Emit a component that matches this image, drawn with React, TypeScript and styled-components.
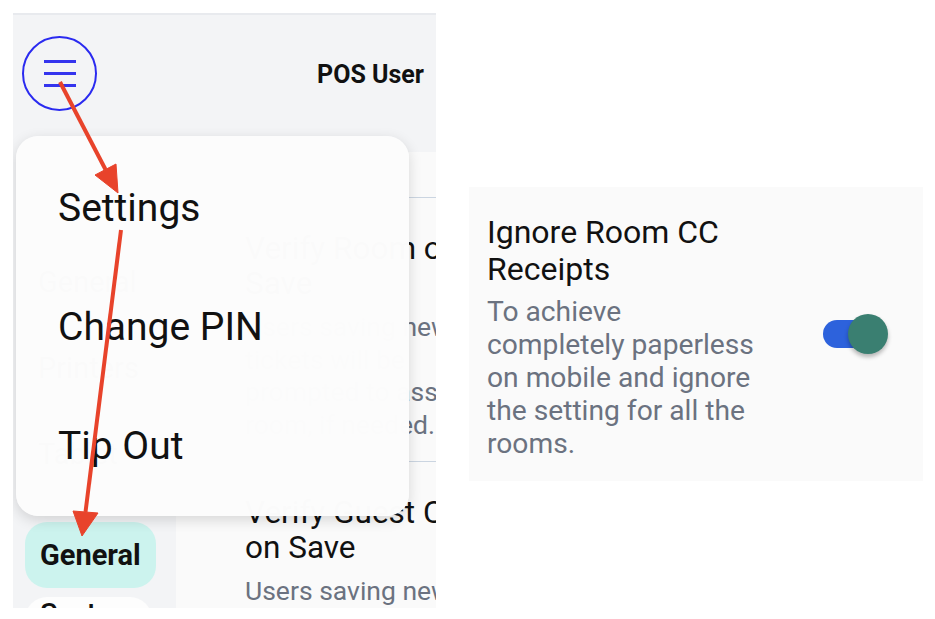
import React from 'react';
import styled, { createGlobalStyle } from 'styled-components';

const GlobalStyle = createGlobalStyle`
	html, body {
		margin: 0;
		padding: 0;
		background: #ffffff;
		font-family: Roboto, 'Noto Sans', 'Liberation Sans', sans-serif;
	}
`;

const Page = styled.div`
	display: flex;
	align-items: flex-start;
	padding: 13px 0 0 13px;
	gap: 33px;
`;

const Phone = styled.div`
	position: relative;
	width: 423px;
	height: 595px;
	flex-shrink: 0;
	overflow: hidden;
	background: #fafafa;
	display: flex;
	flex-direction: column;
`;

const TopStrip = styled.div`
	height: 2px;
	flex-shrink: 0;
	background: #e8eaee;
`;

const Header = styled.header`
	height: 137px;
	flex-shrink: 0;
	box-sizing: border-box;
	padding: 21px 12px 0 9px;
	background: #f3f4f6;
	display: flex;
	align-items: flex-start;
	justify-content: space-between;
`;

const MenuButton = styled.button`
	width: 75px;
	height: 75px;
	box-sizing: border-box;
	border: 2px solid #2a2af0;
	border-radius: 50%;
	background: transparent;
	padding: 0;
	display: flex;
	flex-direction: column;
	align-items: center;
	justify-content: center;
	gap: 9.5px;
`;

const BurgerLine = styled.span`
	display: block;
	width: 32px;
	height: 2.5px;
	background: #3434ee;
`;

const UserName = styled.div`
	line-height: 78px;
	font-size: 25px;
	font-weight: 700;
	color: #111;
`;

const Body = styled.div`
	flex: 1;
	display: flex;
	min-height: 0;
`;

const Sidebar = styled.nav`
	width: 163px;
	flex-shrink: 0;
	box-sizing: border-box;
	padding-top: 97px;
	background: #f3f4f6;
	display: flex;
	flex-direction: column;
	gap: 20px;
`;

const NavGroup = styled.div`
	flex-shrink: 0;
	display: flex;
	flex-direction: column;
	gap: 9px;
	margin-top: 15px;
`;

const NavItem = styled.div<{ $active?: boolean; $pill?: boolean }>`
	flex-shrink: 0;
	align-self: flex-start;
	height: 66px;
	margin-left: ${(p) => (p.$pill ? '12px' : '10px')};
	padding: 0 15px;
	border-radius: 22px;
	display: flex;
	align-items: ${(p) => (p.$pill && !p.$active ? 'flex-start' : 'center')};
	line-height: 35px;
	font-size: 29px;
	font-weight: ${(p) => (p.$active ? 700 : p.$pill ? 500 : 400)};
	color: #111;
	background: ${(p) => (p.$active ? '#ccf3ee' : p.$pill ? '#fdfdfd' : 'transparent')};
`;

const Content = styled.section`
	flex: 1;
	padding-top: 45px;
	background: #fafafa;
	overflow: hidden;
`;

const SettingRow = styled.article`
	border-top: 1.5px solid #cbd5e1;
	padding: 33px 0 20px 69px;
`;

const RowTitle = styled.div`
	width: 340px;
	font-size: 31.5px;
	line-height: 35px;
	color: #111;
	white-space: pre-line;
`;

const RowText = styled.div`
	width: 250px;
	margin-top: 10px;
	font-size: 26.5px;
	line-height: 32.5px;
	color: #6b7280;
`;

const Menu = styled.div`
	position: absolute;
	left: 3px;
	top: 123px;
	width: 393px;
	height: 380px;
	box-sizing: border-box;
	padding: 13px 0 0 42px;
	border-radius: 22px;
	background: rgba(252, 252, 252, 0.994);
	box-shadow: 0 4px 14px rgba(0, 0, 0, 0.14);
`;

const MenuItem = styled.div`
	height: 119px;
	line-height: 119px;
	font-size: 39px;
	color: #111;
`;

const Arrows = styled.svg`
	position: absolute;
	left: 0;
	top: 0;
	width: 423px;
	height: 595px;
	pointer-events: none;
`;

const Card = styled.div`
	margin-top: 174px;
	width: 454px;
	height: 294px;
	box-sizing: border-box;
	padding: 27px 35px 0 18px;
	background: #fafafa;
	display: flex;
	align-items: center;
	justify-content: space-between;
`;

const CardText = styled.div`
	align-self: flex-start;
	width: 272px;
`;

const CardTitle = styled.div`
	font-size: 32px;
	line-height: 37px;
	color: #111;
`;

const CardDesc = styled.div`
	margin-top: 7px;
	font-size: 28.2px;
	line-height: 33px;
	color: #6b7280;
`;

const Switch = styled.div`
	position: relative;
	width: 65px;
	height: 40px;
	margin-top: -27px;
	display: flex;
	align-items: center;
`;

const Track = styled.span`
	width: 54px;
	height: 28px;
	border-radius: 14px;
	background: #2d62dc;
`;

const Thumb = styled.span`
	position: absolute;
	right: 0;
	top: 0;
	width: 40px;
	height: 40px;
	border-radius: 50%;
	background: #3a7f71;
	box-shadow: 0 3px 4px rgba(0, 0, 0, 0.28);
`;

const rows = [
	{ title: 'Verify Room on Check\nSave', text: 'Users saving new tickets will be prompted to assign room, if needed.' },
	{ title: 'Verify Guest Count\non Save', text: 'Users saving new tickets will be prompted.' },
];

const Arrow = ({ from, tip, base }: { from: [number, number]; tip: [number, number]; base: [number, number][] }) => (
	<g fill='#e8432b' stroke='#e8432b'>
		<line x1={from[0]} y1={from[1]} x2={(base[0][0] + base[1][0]) / 2} y2={(base[0][1] + base[1][1]) / 2} strokeWidth={4} />
		<polygon points={`${tip[0]},${tip[1]} ${base[0][0]},${base[0][1]} ${base[1][0]},${base[1][1]}`} strokeWidth={1} />
	</g>
);

const App = () => {
	return (
		<>
			<GlobalStyle />
			<Page>
				<Phone>
					<TopStrip />
					<Header>
						<MenuButton aria-label='menu'>
							<BurgerLine />
							<BurgerLine />
							<BurgerLine />
						</MenuButton>
						<UserName>POS User</UserName>
					</Header>
					<Body>
						<Sidebar>
							<NavItem>General</NavItem>
							<NavItem>Printers</NavItem>
							<NavItem>Tablet</NavItem>
							<NavGroup>
								<NavItem $pill $active>General</NavItem>
								<NavItem $pill>System</NavItem>
							</NavGroup>
						</Sidebar>
						<Content>
							{rows.map((row) => (
								<SettingRow key={row.title}>
									<RowTitle>{row.title}</RowTitle>
									<RowText>{row.text}</RowText>
								</SettingRow>
							))}
						</Content>
					</Body>
					<Menu>
						<MenuItem>Settings</MenuItem>
						<MenuItem>Change PIN</MenuItem>
						<MenuItem>Tip Out</MenuItem>
					</Menu>
					<Arrows viewBox='0 0 423 595'>
						<Arrow from={[47, 69]} tip={[105, 180]} base={[[82, 162], [103, 151]]} />
						<Arrow from={[108, 217]} tip={[69, 523]} base={[[85, 500], [60, 498]]} />
					</Arrows>
				</Phone>
				<Card>
					<CardText>
						<CardTitle>Ignore Room CC Receipts</CardTitle>
						<CardDesc>To achieve completely paperless on mobile and ignore the setting for all the rooms.</CardDesc>
					</CardText>
					<Switch>
						<Track />
						<Thumb />
					</Switch>
				</Card>
			</Page>
		</>
	);
};

export default App;
